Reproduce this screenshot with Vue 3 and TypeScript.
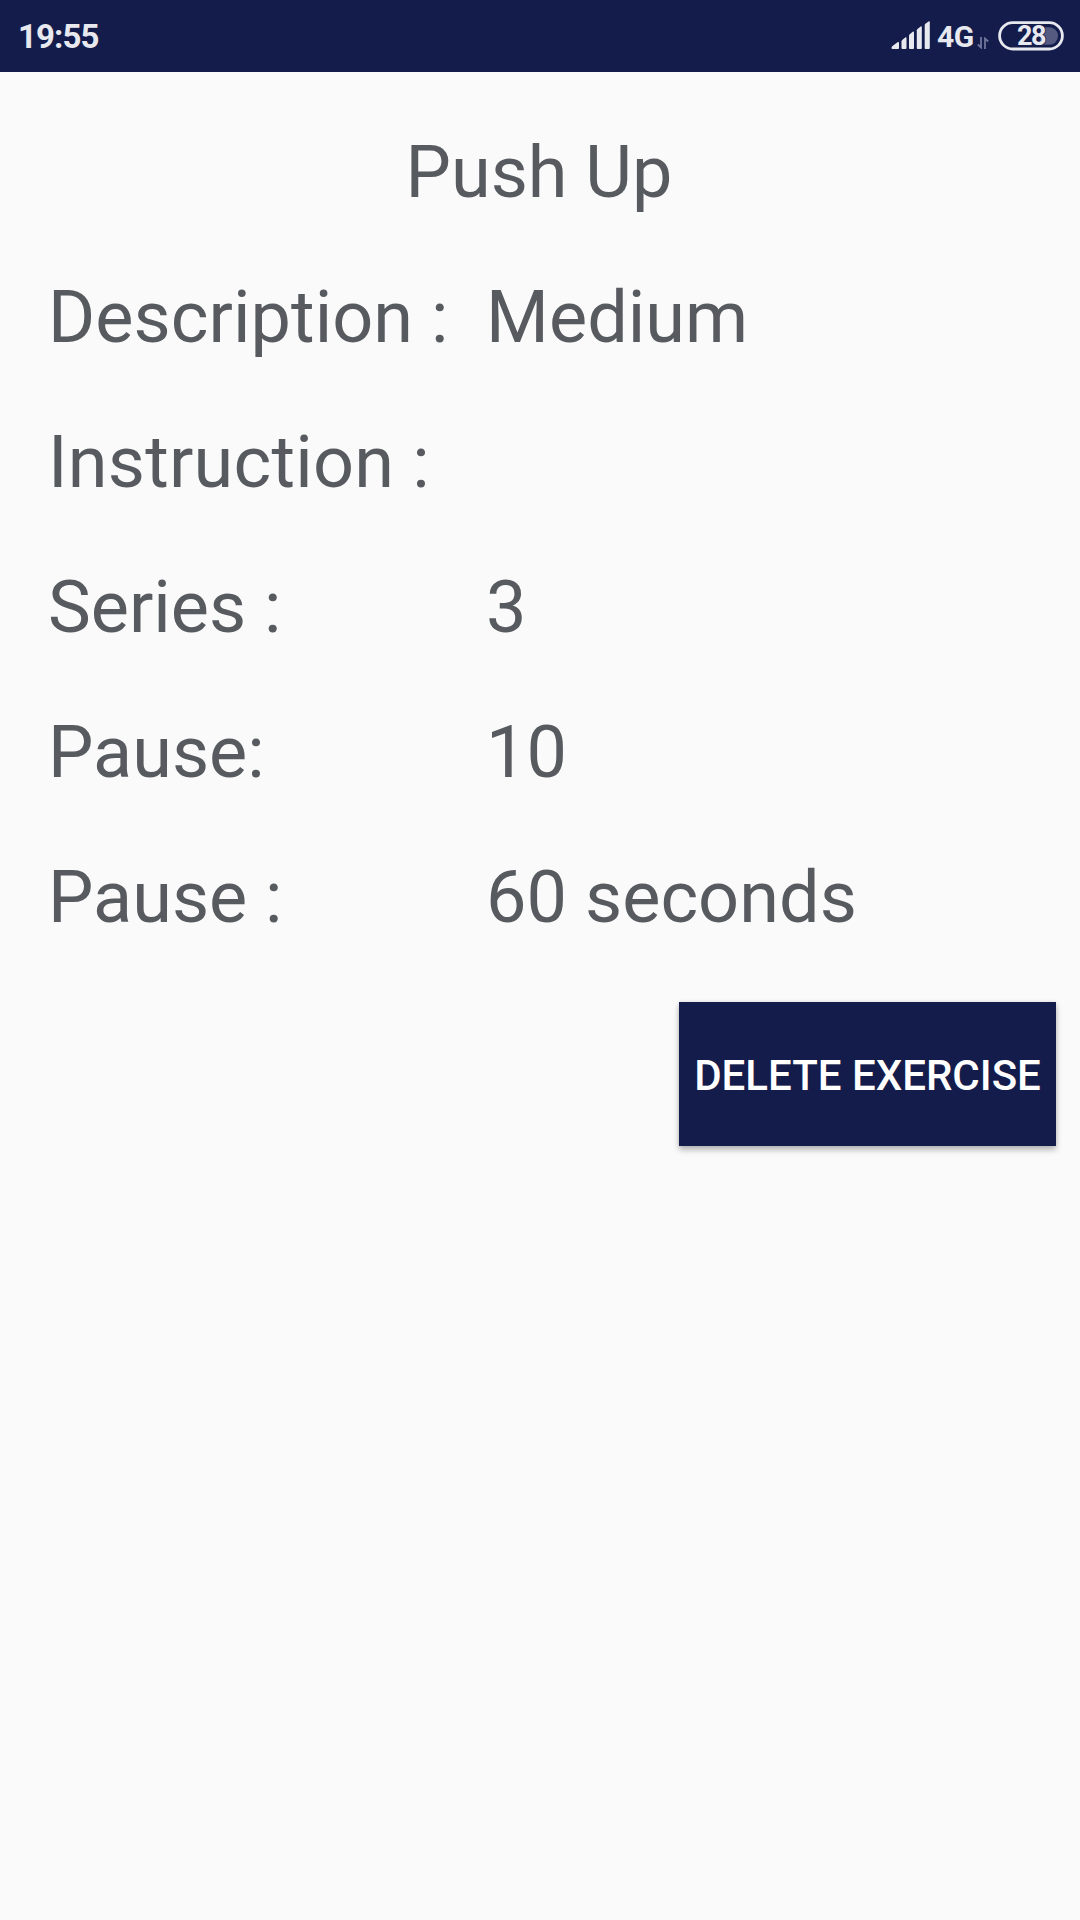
<script setup lang="ts">
interface Row { label: string; value: string; spacing?: string }
const rows: Row[] = [
  { label: 'Description :', value: 'Medium', spacing: '0.06px' },
  { label: 'Instruction :', value: '', spacing: '0.22px' },
  { label: 'Series :', value: '3' },
  { label: 'Pause:', value: '10' },
  { label: 'Pause :', value: '60 seconds' },
]
</script>

<template>
  <div class="screen">
    <header class="status">
      <span class="time">19:55</span>
      <svg class="signal" width="40" height="30" viewBox="0 0 40 30" fill="#e8e9ef">
        <path d="M1.5 28Q.5 28 .5 27Q.5 25.8 1.5 25L6.5 21.3Q8 20.5 8 22V27Q8 28 7 28Z" />
        <path d="M10.5 20.4Q10.5 19.6 11.2 19L14.2 16.5Q15.5 15.7 15.5 17.2V27Q15.5 28 14.5 28H11.5Q10.5 28 10.5 27Z" />
        <path d="M18 14.6Q18 13.8 18.7 13.2L21.7 10.8Q23 10 23 11.5V27Q23 28 22 28H19Q18 28 18 27Z" />
        <path d="M25.8 9.3Q25.8 8.5 26.5 7.9L29.6 5.6Q30.8 4.8 30.8 6.3V27Q30.8 28 29.8 28H26.8Q25.8 28 25.8 27Z" />
        <path d="M33.7 4.1Q33.7 3.3 34.4 2.7L37.5.5Q38.8 -.3 38.8 1.2V27Q38.8 28 37.8 28H34.7Q33.7 28 33.7 27Z" />
      </svg>
      <span class="net">4G</span>
      <svg class="arrows" width="12" height="12" viewBox="0 0 12 12" fill="none" stroke="#70759a" stroke-width="1.8">
        <path d="M4 0V10.5L.8 7.5M8 12V1.5L11.2 4.5" />
      </svg>
      <svg class="battery" width="66" height="30" viewBox="0 0 66 30">
        <path d="M42 6.3H51.3a8.7 8.7 0 0 1 0 17.4H42Z" fill="#555a80" />
        <rect x="1.6" y="1.6" width="62.8" height="26.4" rx="13.2" fill="none" stroke="#e8e9ef" stroke-width="2.8" />
        <text class="level" x="33" y="24" text-anchor="middle">28</text>
      </svg>
    </header>
    <main class="content">
      <h1 class="title">Push Up</h1>
      <div v-for="(row, i) in rows" :key="i" class="row">
        <span class="label" :style="{ letterSpacing: row.spacing }">{{ row.label }}</span>
        <span class="value">{{ row.value }}</span>
      </div>
      <button class="delete" type="button">DELETE EXERCISE</button>
    </main>
  </div>
</template>

<style>
body { margin: 0; background: #fafafa; }
</style>
<style scoped>
.screen { width: 1080px; height: 1920px; background: #fafafa; font-family: Roboto, sans-serif; overflow: hidden; }
.status { height: 72px; box-sizing: border-box; padding: 0 16px 0 18px; background: #141c4c; color: #e8e9ef; display: flex; align-items: center; }
.time { font-size: 33px; font-weight: 700; letter-spacing: -0.9px; margin-right: auto; padding-top: 1px; }
.signal { flex: none; }
.net { width: 40px; font-size: 30px; font-weight: 700; letter-spacing: -0.5px; margin-left: 6px; padding-top: 1px; }
.arrows { flex: none; margin: 13px 9px 0 0; }
.battery { flex: none; }
.level { font-size: 27px; font-weight: 700; letter-spacing: -1.5px; fill: #e8e9ef; stroke: #141c4c; stroke-width: 1.5px; paint-order: stroke; }
.content { display: flex; flex-direction: column; color: #575b60; }
.title, .row { font-size: 72px; line-height: 84px; font-weight: 400; }
.title { margin: 59px 2px 0 0; text-align: center; }
.row { display: flex; margin: 61px 0 0 48px; }
.label { width: 438px; }
.value { letter-spacing: 0.05px; }
.delete { align-self: flex-end; width: 377px; height: 144px; margin: 62px 24px 0 0; padding: 2px 0 0; border: 0; background: #141c4c; color: #fff; font: 500 42px Roboto, sans-serif; box-shadow: 0 4px 6px rgba(0,0,0,.26), 0 0 4px rgba(0,0,0,.1); }
</style>
